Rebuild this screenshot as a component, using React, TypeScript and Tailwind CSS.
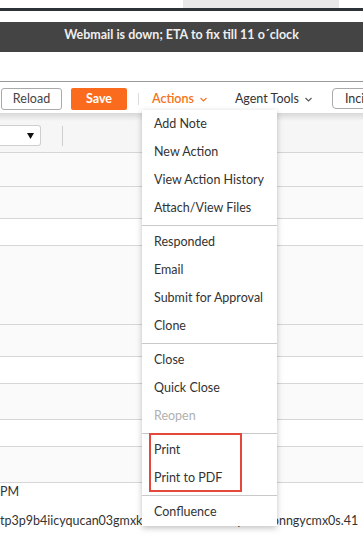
import React from "react";

const Chevron = ({ color }: { color: string }) => (
  <svg width="7" height="5" viewBox="0 0 7 5" className="ml-[6px] mt-[1px] shrink-0">
    <path d="M0.5 1 L3.5 4 L6.5 1" fill="none" stroke={color} strokeWidth="1.1" />
  </svg>
);

const Item = ({ label, disabled }: { label: string; disabled?: boolean }) => (
  <div
    className={
      "h-[28px] leading-[26px] pt-px pl-[12px] whitespace-nowrap " +
      (disabled ? "text-[#b0b0b0]" : "text-[#333]")
    }
  >
    {label}
  </div>
);

const Sep = () => (
  <div className="h-[6px] pt-[3px]">
    <div className="h-px bg-[#c9c9c9]" />
  </div>
);

export default function App() {
  const rows: { h: string; bg: string }[] = [
    { h: "h-[34px]", bg: "bg-[#fafafa]" },
    { h: "h-[32px]", bg: "bg-[#fafafa]" },
    { h: "h-[27px]", bg: "bg-white" },
    { h: "h-[79px]", bg: "bg-[#fafafa]" },
    { h: "h-[32px]", bg: "bg-[#fafafa]" },
    { h: "h-[27px]", bg: "bg-white" },
    { h: "h-[36px]", bg: "bg-[#fafafa]" },
    { h: "h-[27px]", bg: "bg-white" },
    { h: "h-[36px]", bg: "bg-[#fafafa]" },
  ];
  return (
    <div
      className="w-[363px] h-[535px] overflow-hidden bg-white text-[12.5px] text-[#333]"
      style={{ fontFamily: "Lato, 'Open Sans', sans-serif" }}
    >
      {/* top strip */}
      <div className="h-[8px] flex">
        <div className="w-[183px] shrink-0" />
        <div className="w-[156px] shrink-0 bg-[#e8e8e8]" />
      </div>
      <div className="h-[3px] bg-[#2d3236]" />
      <div className="h-[11px]" />
      {/* banner */}
      <div className="h-[30px] bg-[#444444] text-center leading-[26px] text-[#eeeeee] font-bold">
        Webmail is down; ETA to fix till 11 o´clock
      </div>
      <div className="h-[29px]" />
      {/* toolbar */}
      <div className="border-t border-[#999] h-[32px] flex items-start pt-[6px] relative z-20">
        <div className="shrink-0 ml-[1px] w-[61px] h-[22px] border border-[#aaa] rounded-[3px] flex items-center justify-center leading-[20px] text-[#444]">
          Reload
        </div>
        <div className="shrink-0 ml-[9px] w-[56px] h-[22px] rounded-[2px] bg-[#fa6b1e] flex items-center justify-center leading-[22px] text-white font-bold">
          Save
        </div>
        <div className="shrink-0 ml-[11px] mt-[5px] w-px h-[12px] bg-[#dcdcdc]" />
        <div className="shrink-0 relative ml-[3px]">
          <div className="h-[22px] pl-[10px] flex items-center leading-[22px] text-[#f47321] font-semibold">
            Actions
            <Chevron color="#f47321" />
          </div>
          {/* dropdown menu */}
          <div className="absolute left-0 top-full w-[135px] bg-white shadow-[0_2px_6px_rgba(0,0,0,0.25)] z-30">
            <Item label="Add Note" />
            <Item label="New Action" />
            <Item label="View Action History" />
            <Item label="Attach/View Files" />
            <Sep />
            <Item label="Responded" />
            <Item label="Email" />
            <Item label="Submit for Approval" />
            <Item label="Clone" />
            <Sep />
            <Item label="Close" />
            <Item label="Quick Close" />
            <Item label="Reopen" disabled />
            <Sep />
            <Item label="Print" />
            <Item label="Print to PDF" />
            <Sep />
            <Item label="Confluence" />
            <div className="absolute left-[7px] top-[323px] w-[93px] h-[59px] border-2 border-[#e5483b]" />
          </div>
        </div>
        <div className="shrink-0 ml-[28px] h-[22px] flex items-center leading-[22px] text-[#333] whitespace-nowrap">
          Agent Tools
          <Chevron color="#555" />
        </div>
        <div className="shrink-0 ml-[20px] h-[21px] pl-[12px] pr-[10px] border border-[#aaa] rounded-[4px] leading-[19px] whitespace-nowrap">
          Incident
        </div>
      </div>
      {/* filter row */}
      <div className="h-[40px] bg-[#f6f6f6] border-b border-[#d6d6d6]">
        <div className="h-[8px] bg-gradient-to-b from-[#d8d8d8] to-[#f6f6f6]" />
        <div className="flex items-start mt-[4px]">
          <div className="shrink-0 w-[41px] h-[21px] bg-white border border-[#cfcfcf] border-l-0 rounded-r-[3px] flex items-center justify-end pr-[6px]">
            <svg width="7" height="6" viewBox="0 0 7 6">
              <path d="M0 0 H7 L3.5 6 Z" fill="#111" />
            </svg>
          </div>
          <div className="shrink-0 ml-[21px] mt-[1px] w-px h-[20px] bg-[#cfcfcf]" />
        </div>
      </div>
      {rows.map((r, i) => (
        <div key={i} className={r.h + " " + r.bg + " border-b border-[#d6d6d6]"} />
      ))}
      <div className="bg-white text-[12.5px] text-[#333] whitespace-nowrap">
        <div className="leading-[18px]">PM</div>
        <div className="leading-[18px] mt-[11px]">tp3p9b4iicyqucan03gmxk0e8f9c3b5vw1oq4r7hzonngycmx0s.41</div>
      </div>
    </div>
  );
}
